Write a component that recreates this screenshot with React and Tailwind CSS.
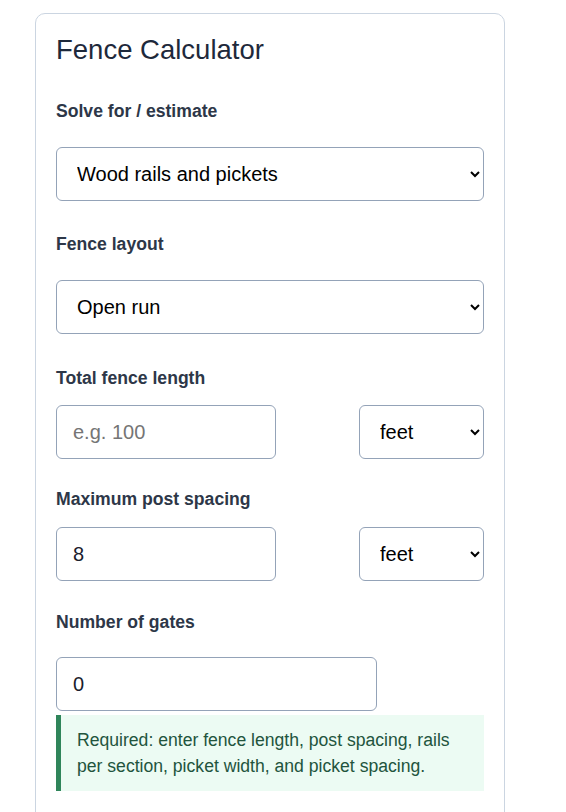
export default function App() {
    const font = { fontFamily: '"Liberation Sans", Arial, sans-serif' };

    return (
        <div className="min-h-screen bg-white" style={font}>
            <div className="ml-[35px] mt-[13px] w-[470px] rounded-[10px] border border-[#cbd5e1] bg-white px-5 pt-[19px] pb-10">
                <h1 className="text-[27.5px] leading-[34px] text-[#1e293b]">Fence Calculator</h1>

                {/* Solve for */}
                <label className="mt-[31px] block text-[17.6px] font-bold leading-[26px] text-[#2d3748]">Solve for / estimate</label>
                <select className="mt-[23px] block h-[54px] w-full rounded-md border border-[#94a3b8] bg-white pl-4 pr-2 text-[20px] text-black">
                    <option>Wood rails and pickets</option>
                </select>

                {/* Layout */}
                <label className="mt-[30px] block text-[17.6px] font-bold leading-[26px] text-[#2d3748]">Fence layout</label>
                <select className="mt-[23px] block h-[54px] w-full rounded-md border border-[#94a3b8] bg-white pl-4 pr-2 text-[20px] text-black">
                    <option>Open run</option>
                </select>

                {/* Length */}
                <label className="mt-[31px] block text-[17.6px] font-bold leading-[26px] text-[#2d3748]">Total fence length</label>
                <div className="mt-[14px] flex items-center justify-between">
                    <input
                        type="text"
                        placeholder="e.g. 100"
                        className="h-[54px] w-[220px] rounded-md border border-[#94a3b8] px-4 text-[20px] text-[#1a202c] placeholder:text-[#757575]"
                    />
                    <select className="h-[54px] w-[125px] rounded-md border border-[#94a3b8] bg-white pl-4 pr-2 text-[20px] text-black">
                        <option>feet</option>
                    </select>
                </div>

                {/* Post spacing */}
                <label className="mt-[27px] block text-[17.6px] font-bold leading-[26px] text-[#2d3748]">Maximum post spacing</label>
                <div className="mt-[15px] flex items-center justify-between">
                    <input
                        type="text"
                        defaultValue="8"
                        className="h-[54px] w-[220px] rounded-md border border-[#94a3b8] px-4 text-[20px] text-[#1a202c]"
                    />
                    <select className="h-[54px] w-[125px] rounded-md border border-[#94a3b8] bg-white pl-4 pr-2 text-[20px] text-black">
                        <option>feet</option>
                    </select>
                </div>

                {/* Gates */}
                <label className="mt-[28px] block text-[17.6px] font-bold leading-[26px] text-[#2d3748]">Number of gates</label>
                <input
                    type="text"
                    defaultValue="0"
                    className="mt-[22px] block h-[54px] w-3/4 rounded-md border border-[#94a3b8] px-4 text-[20px] text-[#1a202c]"
                />

                <div className="mt-1 border-l-[5px] border-[#2f855a] bg-[#ecfbf3] py-3 pl-4 pr-4 text-[17.6px] leading-[26px] text-[#22543d]">
                    Required: enter fence length, post spacing, rails per section, picket width, and picket spacing.
                </div>
            </div>
        </div>
    );
}
